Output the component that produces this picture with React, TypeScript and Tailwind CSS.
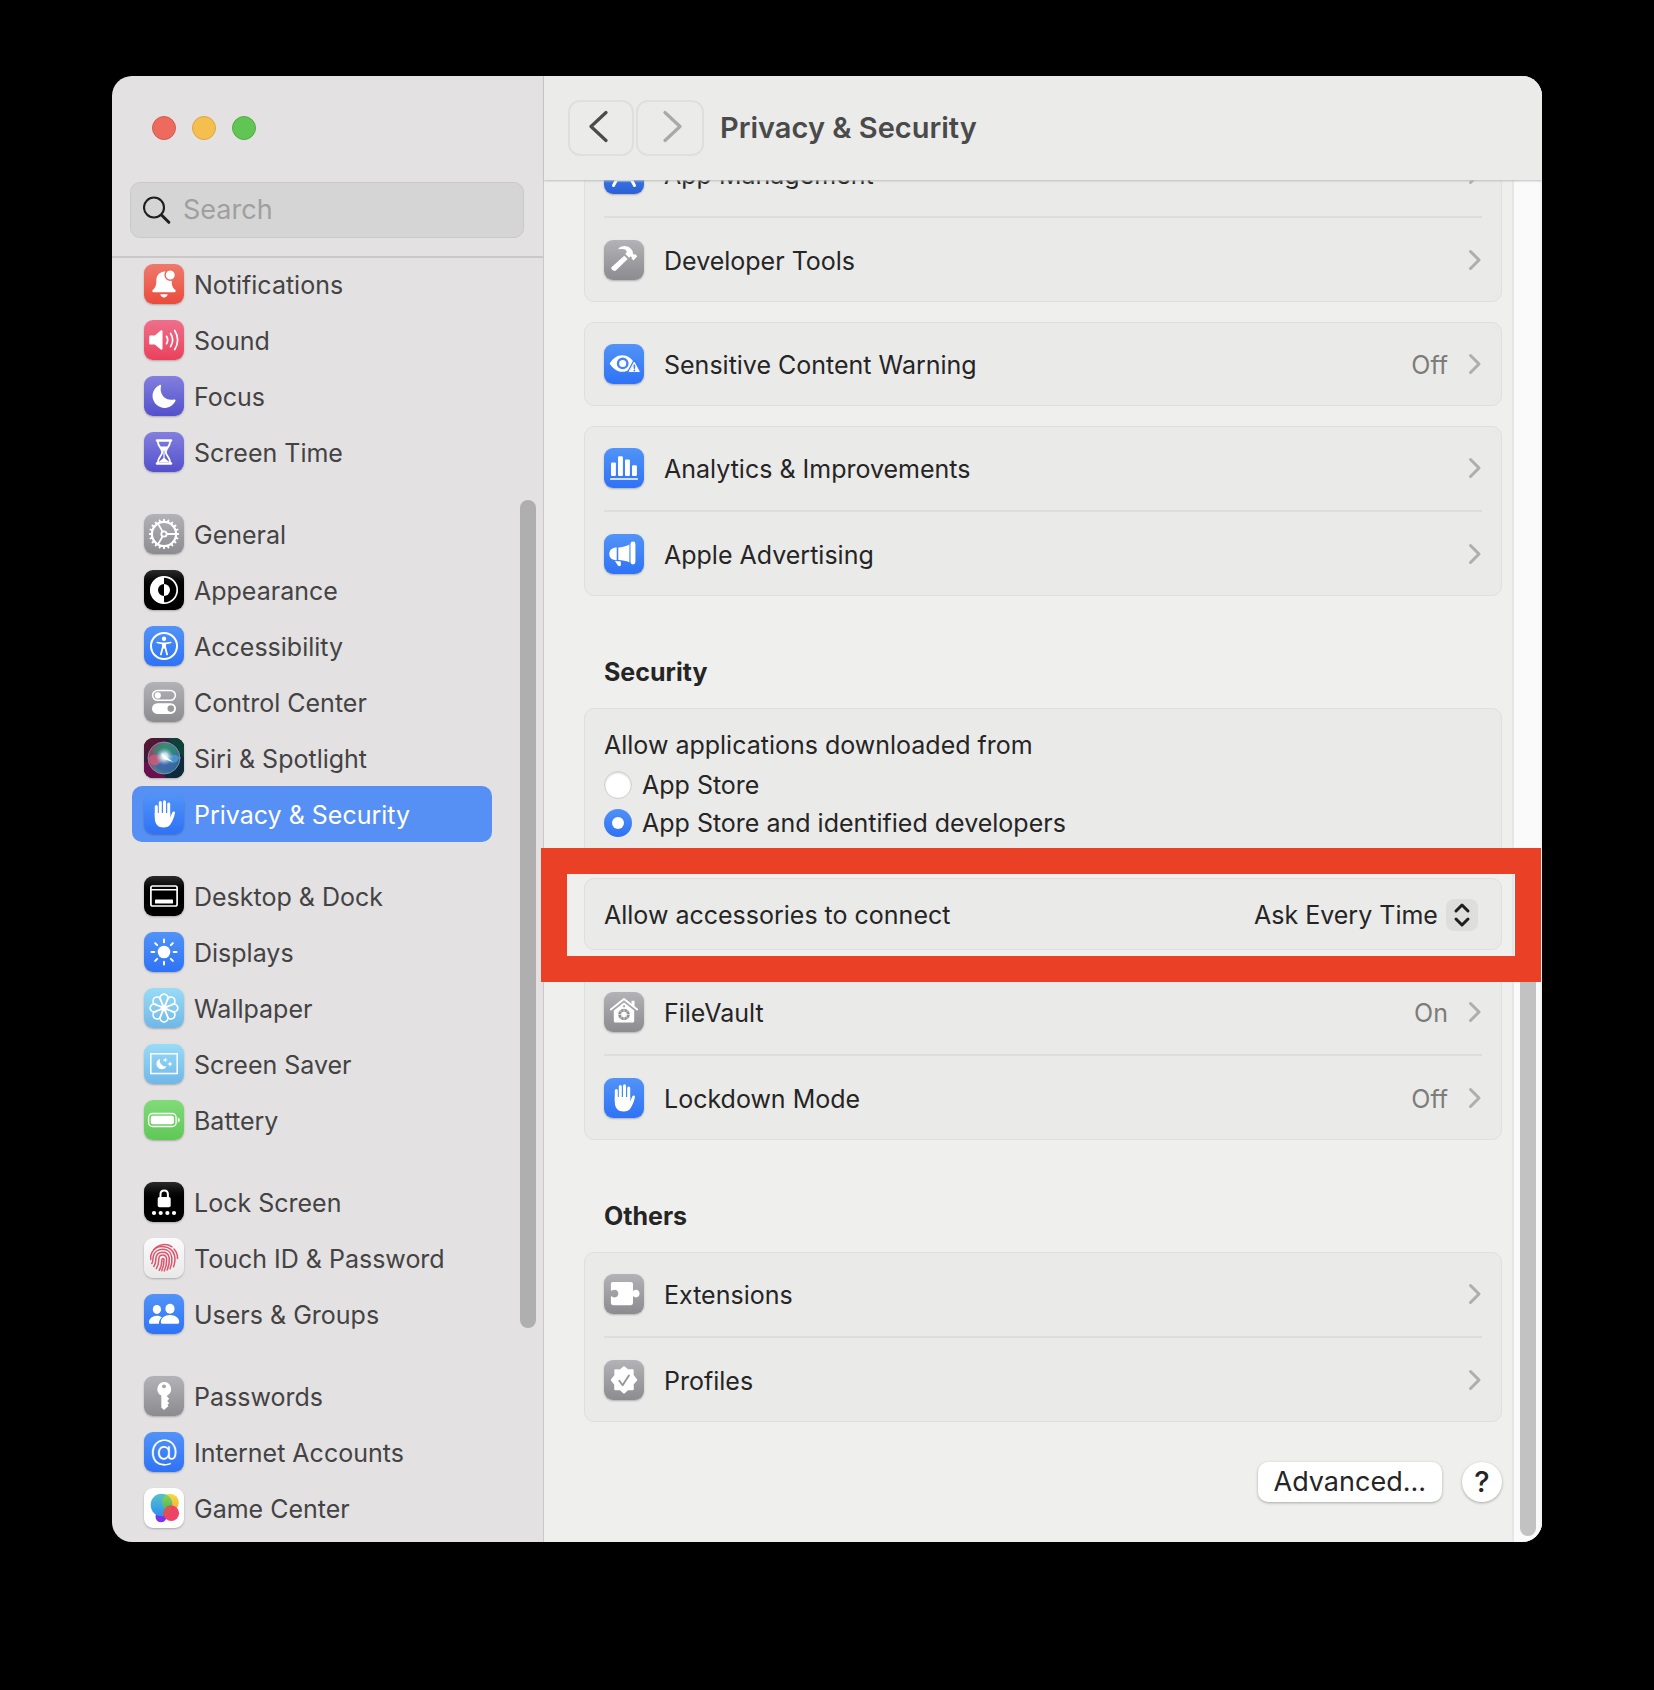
import type { ReactNode } from 'react';

const tones = {
  red: 'bg-linear-to-b from-[#ee796c] to-[#ea4a3c]',
  pink: 'bg-linear-to-b from-[#ee6f8c] to-[#ea3f5b]',
  indigo: 'bg-linear-to-b from-[#837fdf] to-[#544fcb]',
  gray: 'bg-linear-to-b from-[#b3b3b7] to-[#8b8b90]',
  black: 'bg-linear-to-b from-[#2b2b2b] to-[#000000] to-50%',
  blue: 'bg-linear-to-b from-[#5193f7] to-[#2f72f5]',
  royal: 'bg-linear-to-b from-[#4a8ff7] to-[#2d61d6]',
  sky: 'bg-linear-to-b from-[#98dbf6] to-[#70b7e8]',
  green: 'bg-linear-to-b from-[#80dc79] to-[#5fc855]',
  silver: 'bg-linear-to-b from-[#fbfbfb] to-[#e9e9e9]',
  white: 'bg-white',
};

type Tone = keyof typeof tones;

function Glyph({ children }: { children: ReactNode }) {
  return (
    <svg viewBox="0 0 40 40" className="size-full" fill="none" strokeLinecap="round" strokeLinejoin="round" aria-hidden="true">
      {children}
    </svg>
  );
}

const octants = [0, 45, 90, 135, 180, 225, 270, 315];
const teeth = Array.from({ length: 20 }, (_, i) => i * 18);

const icons = {
  notifications: (
    <Glyph>
      <path
        d="M20 7.500c-5.300.8-7.700 4.600-7.700 9.200 0 4.800-.8 6.600-3.600 9.300-.8.900-.4 2.200.9 2.200h20.800c1.300 0 1.700-1.300.9-2.200-2.800-2.700-3.600-4.500-3.600-9.300C27.700 11 25 7 20 7.500Z"
        fill="#fff"
      />
      <path d="M16.300 30.300h7.400c-.6 4.100-6.800 4.100-7.400 0Z" fill="#fff" />
      <circle cx="26.300" cy="11" r="5.200" fill="#fff" stroke="#ec6a5c" strokeWidth="1.500" />
    </Glyph>
  ),
  sound: (
    <Glyph>
      <path
        d="M6.500 15.500h4.300l6-5c.8-.7 1.700-.3 1.700.7v17.600c0 1-.9 1.400-1.700.7l-6-5H6.500c-.8 0-1.300-.5-1.300-1.300v-6.400c0-.8.500-1.300 1.300-1.300Z"
        fill="#fff"
      />
      <path d="M22.500 16.300a7 7 0 0 1 0 7.400M26.600 13.500a12 12 0 0 1 0 13M30.700 10.500a17 17 0 0 1 0 19" stroke="#fff" strokeWidth="1.700" />
    </Glyph>
  ),
  focus: (
    <Glyph>
      <path
        d="M15.700 8.900c.9-.4 1.700.2 1.400 1.200-2.300 8 4.300 15.500 13 13.400 1-.2 1.700.6 1.300 1.500A12 12 0 1 1 15.700 8.900Z"
        fill="#fff"
      />
    </Glyph>
  ),
  screenTime: (
    <Glyph>
      <path d="M13 8.500h14M13 31.500h14" stroke="#fff" strokeWidth="2.600" />
      <path d="M13.800 9c0 6 4.400 7 4.400 11s-4.400 5-4.400 11M26.200 9c0 6-4.400 7-4.400 11s4.400 5 4.400 11" stroke="#fff" strokeWidth="1.900" />
      <path d="M15.500 14.500h9L20.600 19v7l4.600 4H14.800l4.600-4v-7Z" fill="#fff" />
    </Glyph>
  ),
  general: (
    <Glyph>
      <circle cx="20" cy="20" r="12.100" stroke="#fff" strokeWidth="2.200" />
      <circle cx="20" cy="20" r="2.700" stroke="#fff" strokeWidth="1.800" />
      {teeth.map((a) => (
        <path key={a} d="M20 7.500V5.800" stroke="#fff" strokeWidth="2" transform={`rotate(${a} 20 20)`} />
      ))}
      {[90, 210, 330].map((a) => (
        <path key={a} d="M20 17.200V8" stroke="#fff" strokeWidth="1.800" transform={`rotate(${a} 20 20)`} />
      ))}
    </Glyph>
  ),
  appearance: (
    <Glyph>
      <circle cx="20" cy="20" r="13.200" stroke="#fff" strokeWidth="1.700" />
      <path d="M20 6.500a13.500 13.500 0 0 0 0 27V26a6 6 0 0 1 0-12Z" fill="#fff" />
      <path d="M20 14a6 6 0 0 1 0 12Z" fill="#fff" />
    </Glyph>
  ),
  accessibility: (
    <Glyph>
      <circle cx="20" cy="20" r="13" stroke="#fff" strokeWidth="2" />
      <circle cx="20" cy="12.800" r="2.200" fill="#fff" />
      <path d="M13.300 16.500 18 17.400h4l4.700-.9" stroke="#fff" strokeWidth="1.700" />
      <path d="M18 17h4v5.500h-4Z" fill="#fff" />
      <path d="M18.700 21.500 16.900 28.500M21.300 21.500l1.800 7" stroke="#fff" strokeWidth="1.800" />
    </Glyph>
  ),
  controlCenter: (
    <Glyph>
      <rect x="8.600" y="8.400" width="22.800" height="9.900" rx="4.950" stroke="#fff" strokeWidth="1.500" />
      <circle cx="13.800" cy="13.400" r="3.100" fill="#fff" />
      <rect x="8" y="21.300" width="24" height="10.600" rx="5.300" fill="#fff" />
      <circle cx="26.800" cy="26.600" r="3.300" fill="#99999d" />
    </Glyph>
  ),
  siri: (
    <Glyph>
      <defs>
        <linearGradient id="siri-back" x1="0" y1="0" x2="1" y2="1">
          <stop offset="0" stopColor="#6a1230" />
          <stop offset=".45" stopColor="#1d2440" />
          <stop offset="1" stopColor="#092b3c" />
        </linearGradient>
        <linearGradient id="siri-orb" x1="0" y1=".2" x2="1" y2=".6">
          <stop offset="0" stopColor="#a8345c" />
          <stop offset=".45" stopColor="#4f7d88" />
          <stop offset="1" stopColor="#2c68a0" />
        </linearGradient>
        <radialGradient id="siri-glow">
          <stop offset="0" stopColor="#fff" />
          <stop offset=".35" stopColor="#dceef6" stopOpacity=".9" />
          <stop offset="1" stopColor="#7fb8dc" stopOpacity="0" />
        </radialGradient>
        <linearGradient id="siri-green" x1="0" y1="0" x2="0" y2="1">
          <stop offset="0" stopColor="#2c8f70" />
          <stop offset="1" stopColor="#2c8f70" stopOpacity="0" />
        </linearGradient>
      </defs>
      <rect width="40" height="40" rx="9" fill="url(#siri-back)" />
      <path d="M31 0a9 9 0 0 1 9 9v11L24 0Z" fill="#0f4136" />
      <path d="M0 24h8l14 16H9a9 9 0 0 1-9-9Z" fill="#6a1050" />
      <circle cx="20" cy="20" r="16" fill="url(#siri-orb)" />
      <path d="M8 14a14 14 0 0 1 26 2l-12 8Z" fill="url(#siri-green)" />
      <path d="M5 20c3-5 9-4 14-1-1 7-9 11-13 6Z" fill="#e2557c" fillOpacity=".7" />
      <path d="M21 20c5-4 11-4 14-1-1 6-6 7-9 5Z" fill="#4f9bdc" fillOpacity=".8" />
      <path d="m21 21 8 9c-5 4-13 4-18-1Z" fill="#3a62b4" fillOpacity=".7" />
      <circle cx="20.500" cy="18.500" r="9" fill="url(#siri-glow)" />
      <path d="m17 15 12 9-9-3Z" fill="#fff" />
      <circle cx="20" cy="20" r="16" stroke="#9aa9a8" strokeOpacity=".7" strokeWidth="1" />
    </Glyph>
  ),
  hand: (
    <Glyph>
      <path d="M12.300 12.500v10M16.300 8.500v14M20.500 7.700v14M24.700 10v13" stroke="#fff" strokeWidth="3" />
      <path
        d="M10.800 19h15.400v4.500l2.300-5.400c.5-1.200 2.900-.8 2.500.9-1 4.400-2.300 8-4.500 11.200-1.500 2.200-3.700 3.300-6.800 3.300-5.700 0-8.900-3.300-8.900-9.500Z"
        fill="#fff"
      />
    </Glyph>
  ),
  desktop: (
    <Glyph>
      <rect x="6.900" y="10" width="26.200" height="20" rx="1.800" stroke="#fff" strokeWidth="1.700" />
      <path d="M7 13.700h26" stroke="#fff" strokeWidth="1.400" />
      <rect x="11" y="23.600" width="18" height="4" rx=".6" fill="#fff" />
    </Glyph>
  ),
  displays: (
    <Glyph>
      <circle cx="20" cy="20" r="6.300" fill="#fff" />
      {octants.map((a) => (
        <path key={a} d="M20 10.300V7.500" stroke="#fff" strokeWidth="2" transform={`rotate(${a} 20 20)`} />
      ))}
    </Glyph>
  ),
  wallpaper: (
    <Glyph>
      {octants.map((a) => (
        <path
          key={a}
          d="M21.400 21.500 16.600 12.300a4 4 0 1 1 6.800 0L18.600 21.500"
          stroke="#fff"
          strokeWidth="1.500"
          transform={`rotate(${a} 20 20)`}
        />
      ))}
    </Glyph>
  ),
  screenSaver: (
    <Glyph>
      <path d="M6.800 9.800h26.400v19.700H6.800Z" stroke="#fff" strokeWidth="1.500" strokeLinejoin="miter" />
      <path d="M15.800 14.800a6.300 6.300 0 0 0 6.700 7.700 5.400 5.400 0 1 1-6.700-7.700Z" fill="#fff" />
      <path
        d="m21.300 13.400.7 1.900 1.900.7-1.900.7-.7 1.900-.7-1.900-1.900-.7 1.900-.7ZM26 17.200l.8 2 2 .8-2 .8-.8 2-.8-2-2-.8 2-.8Z"
        fill="#fff"
      />
    </Glyph>
  ),
  battery: (
    <Glyph>
      <rect x="4.600" y="13.500" width="27.500" height="13" rx="3.800" stroke="#fff" strokeWidth="1.300" />
      <rect x="6.800" y="15.700" width="23.100" height="8.600" rx="2" fill="#fff" />
      <path d="M33.800 17.500v5c1.300-.4 2-1.300 2-2.500s-.7-2.100-2-2.500Z" fill="#fff" />
    </Glyph>
  ),
  lockScreen: (
    <Glyph>
      <rect x="13.700" y="15" width="13" height="10.300" rx="1.800" fill="#fff" />
      <path d="M16.500 15.500v-3.300c0-5 7.400-5 7.400 0v3.300" stroke="#fff" strokeWidth="2" />
      {[10, 16.7, 23.4, 30].map((x) => (
        <circle key={x} cx={x} cy="31" r="2.100" fill="#fff" />
      ))}
    </Glyph>
  ),
  touchId: (
    <Glyph>
      <g stroke="#da566d" strokeWidth="1.500">
        <path d="M10 11.500a13.500 13.500 0 0 1 18-2.700M30 11c2.500 2.800 3.600 6 3.500 9.500" />
        <path d="M6.800 21.500C6.300 19 6.800 16.500 8 14.300c5-8.500 19.500-7.500 22.500 3 .8 3.200.3 8-1 11.500" />
        <path d="M7.800 25.500c1.500-2.300.8-4.500 1.500-7.200 2.500-9.500 17-9.300 18.500.7.500 3.900-.3 8.500-1.700 11.800" />
        <path d="M9.800 28.500c2.400-3 1.800-6 2.200-8.800 1.100-7 11.800-7.300 13.200 0 .5 4.300-.4 8.300-2 12.300" />
        <path d="M12.300 30.500c2.700-3.500 2.300-7 2.500-9.800.6-4.900 7-4.900 7.800 0 .3 4.300-.6 8.300-2.300 12.300" />
        <path d="M15.200 32.300c2.700-4 2.600-7.300 2.700-10.800.3-1.400 1.900-1.400 2.100 0 .1 4-.6 7.500-2.200 11.300" />
      </g>
    </Glyph>
  ),
  users: (
    <Glyph>
      <ellipse cx="12.900" cy="15.400" rx="4.100" ry="4.500" fill="#fff" />
      <path
        d="M5 28.200c0-3.500 3.400-6.500 7.900-6.500 2 0 3.700.6 5 1.500-1.900 1.700-3 3.900-3 6.600H6.600c-1 0-1.600-.6-1.600-1.600Z"
        fill="#fff"
      />
      <ellipse cx="26" cy="14.700" rx="4.600" ry="5" fill="#fff" />
      <path d="M16.800 28c0-3.800 4-7 9.200-7s9.200 3.200 9.200 7c0 1.200-.6 1.800-1.700 1.800h-15c-1.100 0-1.700-.6-1.700-1.800Z" fill="#fff" />
    </Glyph>
  ),
  key: (
    <Glyph>
      <path
        d="M20 6a7.200 7.200 0 0 1 3.200 13.600v1.200l2 2-2 2.200 2 2-1.700 1.800 1 1.300L20 34l-2.700-2.600V19.600A7.200 7.200 0 0 1 20 6Z"
        fill="#fff"
      />
      <circle cx="20" cy="10.300" r="1.900" fill="#a5a5a9" />
    </Glyph>
  ),
  at: (
    <span className="flex size-full items-center justify-center pb-1 text-[29px] leading-8 font-light text-white" aria-hidden="true">
      @
    </span>
  ),
  gameCenter: (
    <Glyph>
      <defs>
        <linearGradient id="gc-blue" x1="0" y1="0" x2="0" y2="1">
          <stop offset="0" stopColor="#55c3c9" />
          <stop offset="1" stopColor="#2f8df2" />
        </linearGradient>
        <linearGradient id="gc-yellow" x1="0" y1="0" x2="0" y2="1">
          <stop offset="0" stopColor="#f3dc3f" />
          <stop offset="1" stopColor="#f5a93a" />
        </linearGradient>
        <linearGradient id="gc-green" x1="0" y1="0" x2="0" y2="1">
          <stop offset="0" stopColor="#93cf46" />
          <stop offset="1" stopColor="#3bb573" />
        </linearGradient>
      </defs>
      <circle cx="17" cy="28.800" r="5.500" fill="#7a35ea" />
      <circle cx="26" cy="14.500" r="8.800" fill="url(#gc-yellow)" />
      <ellipse cx="17.500" cy="17" rx="10.800" ry="11.200" fill="url(#gc-blue)" />
      <path d="M22.800 6.800a11.200 11.200 0 0 1 2.700 16.400A8.800 8.800 0 0 1 22.800 6.800Z" fill="url(#gc-green)" />
      <circle cx="27.300" cy="25.300" r="7.800" fill="#ee4368" />
      <path d="M20 22.500a8 8 0 0 1 8.200-5 11 11 0 0 1-8.500 10.700c-.6-2-.5-4 .3-5.700Z" fill="#e0524e" />
    </Glyph>
  ),
  appManagement: (
    <Glyph>
      <path d="M9.500 31.500 20 12l10.500 19.500" stroke="#fff" strokeWidth="3" />
      <path d="M13 26h14" stroke="#fff" strokeWidth="2.500" />
    </Glyph>
  ),
  hammer: (
    <Glyph>
      <path d="m20.300 15.800 3.400 3.200L11.900 30.500c-1.500 1.400-5.500-1.400-4.500-3.300Z" fill="#fff" />
      <path
        d="M14.500 8.300c3.800-3 8.200-2.900 11.500-.3 2.300 1.800 3.200 3.500 2.800 5.600l1.400 1.200 1-.7 2 2.200-3.700 4.200-2-2 .4-1.100-1.300-1.200-1.500 1.500-3.800-3.800 1.400-1.700c.2-2.200-2-3.800-8-3Z"
        fill="#fff"
      />
    </Glyph>
  ),
  eye: (
    <Glyph>
      <path
        d="M5.600 19.500C8.800 14.500 13 11.300 18.300 11.300s9.500 3.200 12.300 8.200c-2.800 5-7 8.300-12.300 8.300S8.800 24.500 5.600 19.500Z"
        fill="#fff"
      />
      <circle cx="18.700" cy="19.400" r="4.700" stroke="#4583f6" strokeWidth="2.400" />
      <path d="M30.400 17.500 36 27.800H24.800Z" fill="#fff" stroke="#3f7ef6" strokeWidth="3" />
      <path d="M30.400 18.500 35.300 27.500H25.500Z" fill="#fff" stroke="#fff" strokeWidth="1" />
      <path d="M30.400 21.300v3" stroke="#3f7ef6" strokeWidth="1.500" />
      <circle cx="30.400" cy="26.500" r=".9" fill="#3f7ef6" />
    </Glyph>
  ),
  analytics: (
    <Glyph>
      <g fill="#fff">
        <rect x="7" y="14.600" width="4.900" height="13.400" rx="1" />
        <rect x="14" y="8.300" width="4.900" height="19.700" rx="1" />
        <rect x="21" y="11.500" width="4.900" height="16.500" rx="1" />
        <rect x="28" y="17.300" width="4.900" height="10.700" rx="1" />
      </g>
      <path d="M6.700 31h26.600" stroke="#fff" strokeWidth="1.500" />
    </Glyph>
  ),
  megaphone: (
    <Glyph>
      <path
        d="M12.700 13.600v12.600C8.300 26.200 5.300 24.200 5.300 20s3-6.400 7.400-6.400ZM14.300 13.500c4.200-.2 7.700-1 11.100-2.900v17.600c-3.400-1.300-6.900-2-11.100-2.200Z"
        fill="#fff"
      />
      <rect x="26.500" y="7.500" width="4.900" height="23" rx="2.400" fill="#fff" />
      <path d="M10.800 26.800c1.800.7 3.600.3 5.800.5l.4 3.300c.1 1.900-2.700 2.200-3.400.5Z" fill="#fff" />
    </Glyph>
  ),
  fileVault: (
    <Glyph>
      <path d="M6.800 17.500 20 7l13.200 10.500" stroke="#fff" strokeWidth="1.900" />
      <path d="M27.500 8.800h3V15l-3-2.200Z" fill="#fff" />
      <path d="M9.800 18.500 20 10.500l10.200 8v10.200c0 1.200-.6 1.800-1.800 1.800H11.600c-1.200 0-1.800-.6-1.800-1.800Z" fill="#fff" />
      <circle cx="20" cy="22.500" r="4.300" stroke="#929297" strokeWidth="3" />
      {octants.map((a) => (
        <path key={a} d="M20 20v-3" stroke="#fff" strokeWidth=".6" transform={`rotate(${a} 20 22.500)`} />
      ))}
      <circle cx="20" cy="14.300" r="1" fill="#929297" />
    </Glyph>
  ),
  puzzle: (
    <Glyph>
      <path
        d="M9 8h17.500C28.200 8 29 8.800 29 10.300v6.500c1.200 0 1.200-1 2.800-1 5 0 5 7.600 0 7.600-1.600 0-1.600-1.100-2.800-1.100v6.500c0 1.600-.8 2.400-2.500 2.400H9.300c-1.600 0-2.400-.8-2.400-2.400v-6.500c1.500 0 1.800 1.100 3.600 1.100 5.200 0 5.200-7.600 0-7.600-1.800 0-2.100 1-3.600 1v-6.500C6.900 8.800 7.500 8 9 8Z"
        fill="#fff"
      />
    </Glyph>
  ),
  profiles: (
    <Glyph>
      <path
        d="m20 7.500 3.600 3 4.900-.1-.1 4.900L32 20l-3.500 4 .1 5-4.900-.1L20 32.500l-3.700-3.500-4.900.1.100-5L8 20l3.600-4.600-.1-4.900 4.900.1Z"
        fill="#fff"
        stroke="#fff"
        strokeWidth="2.400"
      />
      <path d="m15.300 20.800 3.300 4.400 6.300-9.700" stroke="#96969b" strokeWidth="1.900" />
    </Glyph>
  ),
};

type IconName = keyof typeof icons;

type Item = { label: string; icon: IconName; tone: Tone; value?: string; active?: boolean };

const sidebarGroups: Item[][] = [
  [
    { label: 'Notifications', icon: 'notifications', tone: 'red' },
    { label: 'Sound', icon: 'sound', tone: 'pink' },
    { label: 'Focus', icon: 'focus', tone: 'indigo' },
    { label: 'Screen Time', icon: 'screenTime', tone: 'indigo' },
  ],
  [
    { label: 'General', icon: 'general', tone: 'gray' },
    { label: 'Appearance', icon: 'appearance', tone: 'black' },
    { label: 'Accessibility', icon: 'accessibility', tone: 'blue' },
    { label: 'Control Center', icon: 'controlCenter', tone: 'gray' },
    { label: 'Siri & Spotlight', icon: 'siri', tone: 'black' },
    { label: 'Privacy & Security', icon: 'hand', tone: 'blue', active: true },
  ],
  [
    { label: 'Desktop & Dock', icon: 'desktop', tone: 'black' },
    { label: 'Displays', icon: 'displays', tone: 'blue' },
    { label: 'Wallpaper', icon: 'wallpaper', tone: 'sky' },
    { label: 'Screen Saver', icon: 'screenSaver', tone: 'sky' },
    { label: 'Battery', icon: 'battery', tone: 'green' },
  ],
  [
    { label: 'Lock Screen', icon: 'lockScreen', tone: 'black' },
    { label: 'Touch ID & Password', icon: 'touchId', tone: 'silver' },
    { label: 'Users & Groups', icon: 'users', tone: 'blue' },
  ],
  [
    { label: 'Passwords', icon: 'key', tone: 'gray' },
    { label: 'Internet Accounts', icon: 'at', tone: 'blue' },
    { label: 'Game Center', icon: 'gameCenter', tone: 'white' },
  ],
];

function Tile({ icon, tone }: { icon: IconName; tone: Tone }) {
  return (
    <span className={`block size-10 shrink-0 rounded-[9px] shadow-[0_1px_2px_rgba(0,0,0,0.25)] ${tones[tone]}`}>
      {icons[icon]}
    </span>
  );
}

function Card({ items }: { items: Item[] }) {
  return (
    <div className="rounded-[10px] border border-[#dfdfde] bg-[#eaeae9] px-[19px]">
      {items.map((item, i) => (
        <div key={item.label} className={i > 0 ? 'border-t-2 border-[#dededd]' : ''}>
          <button
            type="button"
            className={`flex w-full items-center gap-5 text-left ${i > 0 ? 'pt-[22px]' : 'pt-[21px]'} ${
              i < items.length - 1 ? 'pb-[22px]' : 'pb-[21px]'
            }`}
          >
            <Tile icon={item.icon} tone={item.tone} />
            <span className="flex-1 pt-0.5">{item.label}</span>
            {item.value && <span className="pt-0.5 text-[#7c7c7b]">{item.value}</span>}
            <svg viewBox="0 0 14 24" className="h-6 w-3.5" fill="none" aria-hidden="true">
              <path d="m2.500 3.500 8.500 8.500-8.500 8.500" stroke="#aeaead" strokeWidth="3" strokeLinecap="round" strokeLinejoin="round" />
            </svg>
          </button>
        </div>
      ))}
    </div>
  );
}

function Sidebar() {
  return (
    <aside className="flex w-[432px] shrink-0 flex-col border-r border-[#c9c8c8] bg-[#e3e1e2]">
      <div className="border-b-2 border-[#c9c7c8] pt-10 pb-[18px]">
        <div className="flex gap-4 pl-10">
          <button type="button" aria-label="Close" className="size-6 rounded-full border border-[#d45a50] bg-[#ed6a5e]" />
          <button type="button" aria-label="Minimize" className="size-6 rounded-full border border-[#dba73f] bg-[#f5bf4f]" />
          <button type="button" aria-label="Zoom" className="size-6 rounded-full border border-[#52ad45] bg-[#61c554]" />
        </div>
        <label className="mt-[42px] mr-[19px] ml-[18px] flex h-14 items-center rounded-[10px] border border-[#cac9c9] bg-[#d5d5d5] pl-3">
          <svg viewBox="0 0 28 28" className="size-7 shrink-0" fill="none" stroke="#1f1f1f" strokeLinecap="round" aria-hidden="true">
            <circle cx="11" cy="11.500" r="10" strokeWidth="2.100" />
            <path d="m19 19.500 6.800 6.800" strokeWidth="3" />
          </svg>
          <input
            type="search"
            aria-label="Search"
            placeholder="Search"
            className="ml-3 w-full min-w-0 bg-transparent text-[27px] outline-none placeholder:text-[#a09f9f]"
          />
        </label>
      </div>

      <div className="-mt-0.5 flex flex-1 items-start pr-[7px] pl-5">
        <nav className="mr-7 flex flex-1 flex-col gap-[26px] pb-1.5">
          {sidebarGroups.map((group) => (
            <ul key={group[0].label}>
              {group.map((item) => (
                <li key={item.label}>
                  <a
                    href="#"
                    aria-current={item.active ? 'page' : undefined}
                    className={`flex h-14 items-center gap-2.5 rounded-[10px] px-3 whitespace-nowrap ${
                      item.active ? 'bg-[#5790f5] text-white' : 'text-[#444344]'
                    }`}
                  >
                    <Tile icon={item.icon} tone={item.tone} />
                    <span className="pt-0.5">{item.label}</span>
                  </a>
                </li>
              ))}
            </ul>
          ))}
        </nav>
        <div className="mt-[244px] h-[828px] w-4 rounded-full bg-[#b0afb0]" />
      </div>
    </aside>
  );
}

function Toolbar() {
  return (
    <header className="relative z-10 flex h-26 shrink-0 items-center bg-[#ebebea] pl-6 shadow-[0_1px_2px_#bdbdbd]">
      <button type="button" aria-label="Back" className="flex h-14 w-[66px] items-center justify-center rounded-xl border-2 border-[#dfdfde]">
        <svg viewBox="0 0 24 36" className="mb-1 h-9 w-6" fill="none" stroke="#4b4b4b" strokeWidth="3.200" strokeLinecap="round" strokeLinejoin="round" aria-hidden="true">
          <path d="M17 4.500 2 18.500l15 14" />
        </svg>
      </button>
      <button type="button" aria-label="Forward" className="ml-0.5 flex h-14 w-[68px] items-center justify-center rounded-xl border-2 border-[#dfdfde]">
        <svg viewBox="0 0 24 36" className="mb-1 h-9 w-6" fill="none" stroke="#aaa9a9" strokeWidth="3.200" strokeLinecap="round" strokeLinejoin="round" aria-hidden="true">
          <path d="m7 4.500 15 14-15 14" />
        </svg>
      </button>
      <h1 className="ml-4 text-[29px] font-semibold text-[#4a4a4a]">Privacy &amp; Security</h1>
    </header>
  );
}

export default function App() {
  return (
    <div className="min-h-screen bg-black px-28 pt-19 pb-37 font-[Inter,'Liberation_Sans',sans-serif] text-[25px] leading-8 text-[#252525]">
      <div className="flex overflow-hidden rounded-[20px]">
        <Sidebar />
        <main className="flex min-w-0 flex-1 flex-col bg-[#efefed]">
          <Toolbar />
          <div className="flex flex-1">
            {/* Scrolled so the first card runs under the toolbar */}
            <div className="-mt-12 flex min-w-0 flex-1 flex-col gap-5 pr-2.5 pb-10 pl-10">
              <Card
                items={[
                  { label: 'App Management', icon: 'appManagement', tone: 'royal' },
                  { label: 'Developer Tools', icon: 'hammer', tone: 'gray' },
                ]}
              />
              <Card items={[{ label: 'Sensitive Content Warning', icon: 'eye', tone: 'blue', value: 'Off' }]} />
              <Card
                items={[
                  { label: 'Analytics & Improvements', icon: 'analytics', tone: 'blue' },
                  { label: 'Apple Advertising', icon: 'megaphone', tone: 'blue' },
                ]}
              />

              <h2 className="mt-10 pl-5 font-bold">Security</h2>

              <fieldset className="h-[150px] rounded-[10px] border border-[#dfdfde] bg-[#eaeae9] px-[19px] pt-5">
                <legend className="float-left w-full">Allow applications downloaded from</legend>
                <div className="clear-both flex flex-col gap-1.5 pt-2">
                  <label className="flex items-center gap-2.5">
                    <input
                      type="radio"
                      name="source"
                      className="size-7 appearance-none rounded-full border border-[#cfcfce] bg-white shadow-[inset_0_1px_2px_rgba(0,0,0,0.18)]"
                    />
                    App Store
                  </label>
                  <label className="flex items-center gap-2.5">
                    <input
                      type="radio"
                      name="source"
                      defaultChecked
                      className="grid size-7 appearance-none place-content-center rounded-full bg-linear-to-b from-[#4f91f7] to-[#2f72f5] before:size-3 before:rounded-full before:bg-white"
                    />
                    App Store and identified developers
                  </label>
                </div>
              </fieldset>

              <div className="relative flex h-[72px] items-center justify-between rounded-[10px] border border-[#dfdfde] bg-[#eaeae9] pt-0.5 pr-[23px] pl-[19px]">
                <label htmlFor="accessories">Allow accessories to connect</label>
                <div className="relative">
                  <select id="accessories" className="block appearance-none bg-transparent pr-10 outline-none">
                    <option>Ask Every Time</option>
                  </select>
                  <svg
                    viewBox="0 0 32 32"
                    className="pointer-events-none absolute top-0 right-0 size-8 rounded-lg bg-[#dededd]"
                    fill="none"
                    stroke="#1f1f1f"
                    strokeWidth="3"
                    strokeLinecap="round"
                    strokeLinejoin="round"
                    aria-hidden="true"
                  >
                    <path d="m10 12 6-6 6 6M10 20l6 6 6-6" />
                  </svg>
                </div>
                {/* Highlight frame, spans the whole pane */}
                <div className="pointer-events-none absolute -top-[31px] -right-10 -bottom-[33px] -left-11 z-20 border-26 border-[#ea4026]" />
              </div>

              <Card
                items={[
                  { label: 'FileVault', icon: 'fileVault', tone: 'gray', value: 'On' },
                  { label: 'Lockdown Mode', icon: 'hand', tone: 'blue', value: 'Off' },
                ]}
              />

              <h2 className="mt-10 pl-5 font-bold">Others</h2>

              <Card
                items={[
                  { label: 'Extensions', icon: 'puzzle', tone: 'gray' },
                  { label: 'Profiles', icon: 'profiles', tone: 'gray' },
                ]}
              />

              <div className="mt-5 flex justify-end gap-5">
                <button type="button" className="h-10 rounded-[10px] bg-white px-4 text-[27px] shadow-[0_1px_3px_rgba(0,0,0,0.3)]">
                  Advanced...
                </button>
                <button type="button" aria-label="Help" className="size-10 rounded-full bg-white text-[29px] font-medium shadow-[0_1px_3px_rgba(0,0,0,0.3)]">
                  ?
                </button>
              </div>
            </div>

            <div className="flex w-[30px] flex-col justify-end border-r-2 border-l-2 border-r-[#f2f2f2] border-l-[#e6e6e6] bg-[#fafafa] pb-1.5 pl-1.5">
              <div className="h-[630px] w-4 rounded-full bg-[#c2c2c2]" />
            </div>
          </div>
        </main>
      </div>
    </div>
  );
}
